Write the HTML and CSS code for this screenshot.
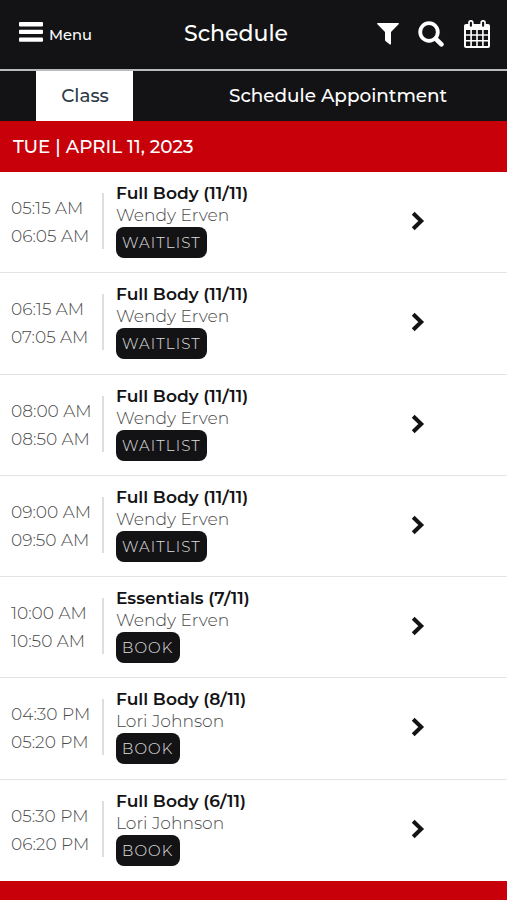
FILE: index.html
```html
<!DOCTYPE html>
<html lang="en">
<head>
<meta charset="utf-8">
<title>Schedule</title>
<link rel="stylesheet" href="styles.css">
</head>
<body>
<header class="topbar">
  <div class="menu">
    <svg width="24" height="20" viewBox="0 0 24 20"><g fill="#fff"><rect width="24" height="4.4" rx="1"/><rect y="7.7" width="24" height="4.4" rx="1"/><rect y="15.4" width="24" height="4.4" rx="1"/></g></svg>
    <span class="menu-label">Menu</span>
  </div>
  <h1 class="title">Schedule</h1>
  <div class="actions">
    <svg width="22" height="22" viewBox="0 0 22 22"><path fill="#fff" d="M.6 0h20.8q.9.5.2 1.300L14 9v12q-.4.900-1.200.5L8.400 18 8 17V9L.4 1.300Q-.3.500.6 0z"/></svg>
    <svg class="search" width="26" height="26" viewBox="0 0 26 26" fill="none" stroke="#fff"><circle cx="11" cy="11" r="8.800" stroke-width="3.800"/><path d="M17.800 17.800l5.600 5.600" stroke-width="4.600" stroke-linecap="round"/></svg>
    <svg width="26" height="28" viewBox="0 0 26 28"><rect y="4" width="26" height="24" rx="2" fill="#fff"/><path fill="#131315" d="M2 10h4.300v4.300H2zM7.900 10h4.300v4.300H7.900zM13.800 10h4.300v4.300h-4.300zM19.700 10H24v4.300h-4.300zM2 15.800h4.300v4.300H2zM7.900 15.800h4.300v4.300H7.900zM13.800 15.800h4.300v4.300h-4.300zM19.700 15.800H24v4.300h-4.300zM2 21.600h4.300v4.300H2zM7.900 21.600h4.300v4.300H7.900zM13.800 21.600h4.300v4.300h-4.300zM19.700 21.600H24v4.300h-4.300z"/><g fill="#131315" stroke="#fff" stroke-width="1.700"><rect x="5" y=".9" width="3.800" height="6.600" rx="1.800"/><rect x="17.200" y=".9" width="3.800" height="6.600" rx="1.800"/></g></svg>
  </div>
</header>
<nav class="tabs">
  <div class="tab tab-active">Class</div>
  <div class="tab tab-wide"><span>Schedule Appointment</span></div>
</nav>
<h2 class="date">TUE | APRIL 11, 2023</h2>
<main class="list">
  <article class="row">
    <div class="times"><span>05:15 AM</span><span>06:05 AM</span></div>
    <div class="info"><b>Full Body (11/11)</b><span class="coach">Wendy Erven</span><span class="btn">WAITLIST</span></div>
    <svg class="chev" viewBox="0 0 14 20"><path d="M2.200 2.200L10.200 10l-8 7.800"/></svg>
  </article>
  <article class="row">
    <div class="times"><span>06:15 AM</span><span>07:05 AM</span></div>
    <div class="info"><b>Full Body (11/11)</b><span class="coach">Wendy Erven</span><span class="btn">WAITLIST</span></div>
    <svg class="chev" viewBox="0 0 14 20"><path d="M2.200 2.200L10.200 10l-8 7.800"/></svg>
  </article>
  <article class="row">
    <div class="times"><span>08:00 AM</span><span>08:50 AM</span></div>
    <div class="info"><b>Full Body (11/11)</b><span class="coach">Wendy Erven</span><span class="btn">WAITLIST</span></div>
    <svg class="chev" viewBox="0 0 14 20"><path d="M2.200 2.200L10.200 10l-8 7.800"/></svg>
  </article>
  <article class="row">
    <div class="times"><span>09:00 AM</span><span>09:50 AM</span></div>
    <div class="info"><b>Full Body (11/11)</b><span class="coach">Wendy Erven</span><span class="btn">WAITLIST</span></div>
    <svg class="chev" viewBox="0 0 14 20"><path d="M2.200 2.200L10.200 10l-8 7.800"/></svg>
  </article>
  <article class="row">
    <div class="times"><span>10:00 AM</span><span>10:50 AM</span></div>
    <div class="info"><b>Essentials (7/11)</b><span class="coach">Wendy Erven</span><span class="btn btn-book">BOOK</span></div>
    <svg class="chev" viewBox="0 0 14 20"><path d="M2.200 2.200L10.200 10l-8 7.800"/></svg>
  </article>
  <article class="row">
    <div class="times"><span>04:30 PM</span><span>05:20 PM</span></div>
    <div class="info"><b>Full Body (8/11)</b><span class="coach">Lori Johnson</span><span class="btn btn-book">BOOK</span></div>
    <svg class="chev" viewBox="0 0 14 20"><path d="M2.200 2.200L10.200 10l-8 7.800"/></svg>
  </article>
  <article class="row">
    <div class="times"><span>05:30 PM</span><span>06:20 PM</span></div>
    <div class="info"><b>Full Body (6/11)</b><span class="coach">Lori Johnson</span><span class="btn btn-book">BOOK</span></div>
    <svg class="chev" viewBox="0 0 14 20"><path d="M2.200 2.200L10.200 10l-8 7.800"/></svg>
  </article>
</main>
<h2 class="date">WED | APRIL 12, 2023</h2>
</body>
</html>
```
FILE: styles.css
```css
* { box-sizing: border-box; }
body {
  margin: 0;
  height: 900px;
  overflow: hidden;
  background: #fff;
  font-family: Montserrat, Inter, "Liberation Sans", sans-serif;
  color: #131315;
  display: flex;
  flex-direction: column;
}
body > * { flex: none; }
h1, h2 { margin: 0; font-weight: 500; }
svg { display: block; flex: none; }
.topbar {
  height: 71px;
  padding: 0 17px 2px 19px;
  display: grid;
  grid-template-columns: 165px 1fr auto;
  align-items: center;
  background: #131315;
  border-bottom: 2px solid #b9bcbc;
  color: #fff;
}
.menu { display: flex; align-items: center; gap: 6px; margin-top: -4px; }
.menu-label { font-size: 14.700px; font-weight: 500; padding-top: 7px; }
.title { font-size: 22px; line-height: 30px; }
.actions { display: flex; align-items: center; gap: 19px; padding-top: 1px; }
.search { margin-right: 1px; }
.tabs { height: 50px; display: flex; padding-left: 36px; background: #131315; color: #fff; font-size: 18.400px; font-weight: 500; line-height: 50px; }
.tab-active { width: 97px; padding-left: 1px; text-align: center; background: #fff; color: #2f3b49; }
.tab-wide { padding-left: 96px; }
.date { height: 51px; padding-left: 13px; line-height: 52px; background: #c70009; color: #fff; font-size: 18.360px; white-space: nowrap; }
.date:last-child { line-height: 53px; }
.list { height: 709px; display: grid; grid-template-rows: repeat(7, 1fr); }
.row { display: flex; border-bottom: 1.500px solid #e3e3e3; white-space: nowrap; }
.row:last-child { border-bottom: 0; }
.times { width: 104px; height: 56px; margin-top: 21px; padding: 1px 0 0 11px; border-right: 2px solid #dedede; display: flex; flex-direction: column; font-size: 17.050px; font-weight: 300; line-height: 28px; color: #4a4a4a; }
.info { width: 295px; padding: 10px 0 0 12px; display: flex; flex-direction: column; align-items: flex-start; line-height: 22px; font-size: 17.100px; }
.info b { font-weight: 600; }
.coach { font-weight: 300; color: #4a4a4a; }
.btn { height: 31px; margin-top: 1px; width: 91px; padding-left: 6px; border-radius: 8px; background: #131315; color: #e0e0e0; font-size: 15px; font-weight: 300; line-height: 31px; letter-spacing: 1.100px; }
.btn-book { width: 64px; }
.chev { width: 14px; height: 20px; margin: 39px 0 0 12px; fill: none; stroke: #131315; stroke-width: 4; }
```
